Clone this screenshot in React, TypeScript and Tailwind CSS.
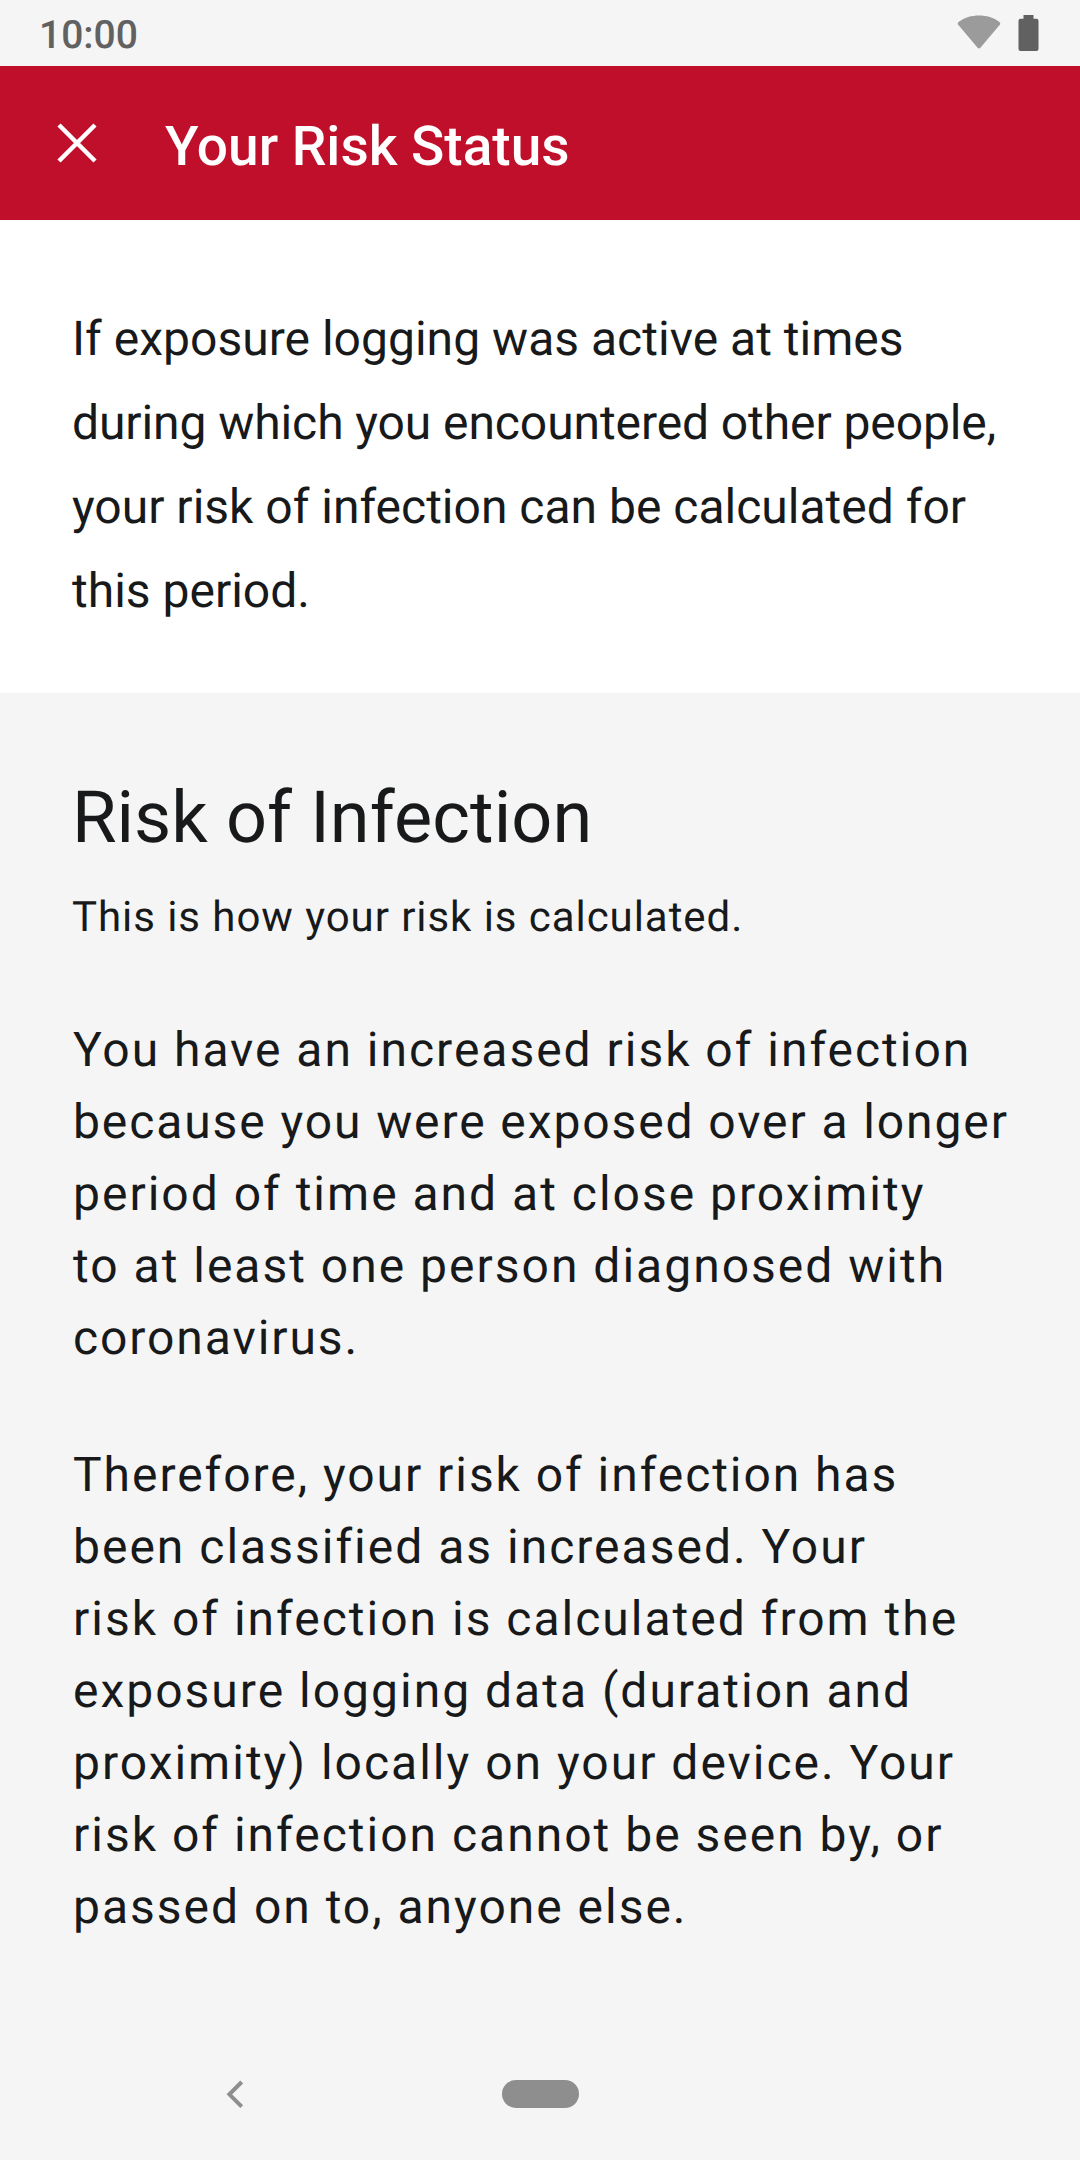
import React from "react";

type Line = [text: string, tracking?: string];

const intro: Line[] = [
  ["If exposure logging was active at times", "tracking-[0.020px]"],
  ["during which you encountered other people,", "tracking-[-0.090px]"],
  ["your risk of infection can be calculated for"],
  ["this period."],
];

const exposure: Line[] = [
  ["You have an increased risk of infection", "tracking-[1.980px]"],
  ["because you were exposed over a longer", "tracking-[1.900px]"],
  ["period of time and at close proximity", "tracking-[2px]"],
  ["to at least one person diagnosed with", "tracking-[2px]"],
  ["coronavirus.", "tracking-[1.920px]"],
];

const classification: Line[] = [
  ["Therefore, your risk of infection has", "tracking-[1.950px]"],
  ["been classified as increased. Your", "tracking-[2px]"],
  ["risk of infection is calculated from the", "tracking-[2px]"],
  ["exposure logging data (duration and", "tracking-[2px]"],
  ["proximity) locally on your device. Your", "tracking-[2px]"],
  ["risk of infection cannot be seen by, or", "tracking-[2px]"],
  ["passed on to, anyone else.", "tracking-[1.980px]"],
];

function Lines({ lines, className }: { lines: Line[]; className: string }) {
  return (
    <p className={className}>
      {lines.map(([text, tracking]) => (
        <span key={text} className={`block whitespace-nowrap ${tracking ?? ""}`}>
          {text}
        </span>
      ))}
    </p>
  );
}

export default function App() {
  return (
    <div className="flex h-[2160px] w-[1080px] flex-col overflow-hidden bg-[#f5f5f5] font-['Roboto',sans-serif] text-[#17191a] [text-rendering:geometricPrecision]">
      <header className="flex h-[66px] shrink-0 items-center justify-between pr-[41px] pl-[39px] text-[#616161]">
        <span className="pt-[5px] text-[39px] leading-none font-medium">10:00</span>
        <div className="flex items-start gap-[17px]">
          <svg width="44" height="36" viewBox="0 0 44 36" fill="#9b9b9b">
            <path d="M20.600 32.700 1 9.500Q.200 8 1.500 7C7.500 2.500 14.500 .500 22 .500S36.500 2.500 42.500 7q1.300 1 .500 2.500L23.400 32.700q-1.400 1.400-2.800 0Z" />
          </svg>
          <svg width="21" height="36" viewBox="0 0 21 36" fill="#616161">
            <path d="M5.500 0h10v3.700h3a2 2 0 0 1 2 2V34a2 2 0 0 1-2 2h-16a2 2 0 0 1-2-2V5.700a2 2 0 0 1 2-2h3Z" />
          </svg>
        </div>
      </header>
      <div className="flex h-[154px] shrink-0 items-center bg-[#c00f2b] pl-[57px] text-white">
        <svg width="40" height="40" viewBox="0 0 40 40" stroke="currentColor" strokeWidth="4.500">
          <path d="m2 2 36 36M38 2 2 38" />
        </svg>
        <h1 className="pt-[8px] pl-[68px] text-[55px] leading-none font-medium">Your Risk Status</h1>
      </div>
      <section className="h-[473px] shrink-0 bg-white pt-[77px] pl-[72px]">
        <Lines lines={intro} className="text-[48px] leading-[84px]" />
      </section>
      <main className="grow pt-[81px] pl-[72px]">
        <h2 className="text-[72px] leading-[88px] tracking-[0.100px]">Risk of Infection</h2>
        <p className="mt-[28px] text-[42px] leading-[56px] tracking-[0.940px]">This is how your risk is calculated.</p>
        <Lines lines={exposure} className="mt-[68px] pl-px text-[48px] leading-[72px]" />
        <Lines lines={classification} className="mt-[65px] pl-px text-[48px] leading-[72px]" />
      </main>
      <nav className="flex h-[132px] shrink-0 items-center pl-[226px]">
        <svg width="18" height="28" viewBox="0 0 18 28" fill="none" stroke="#8e8e8e" strokeWidth="4">
          <path d="M15.700 2 3.400 14.300l12.300 12.300" />
        </svg>
        <div className="ml-[258px] h-[28px] w-[77px] rounded-full bg-[#8e8e8e]" />
      </nav>
    </div>
  );
}
